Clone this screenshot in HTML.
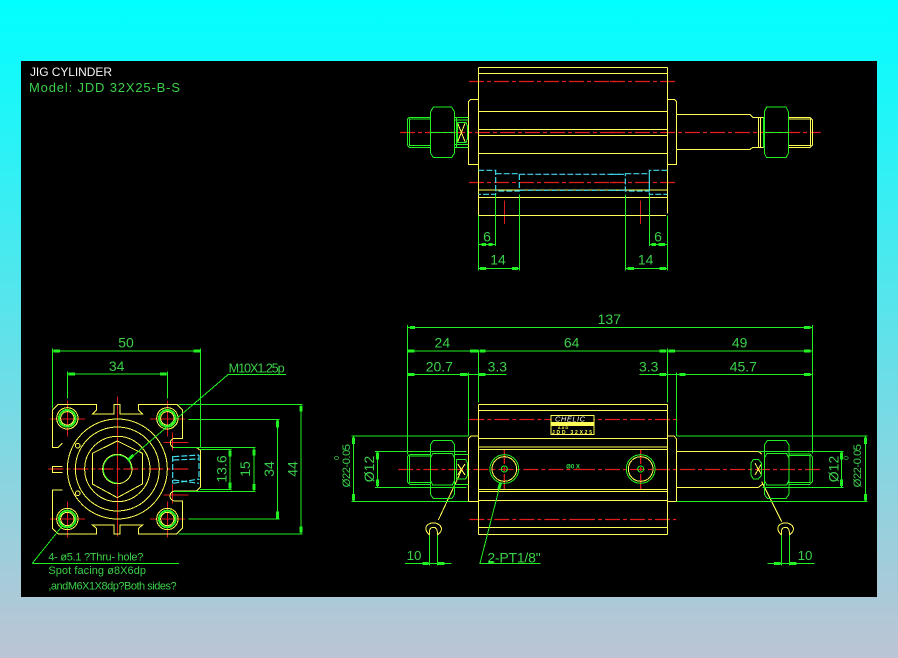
<!DOCTYPE html>
<html><head><meta charset="utf-8"><style>
html,body{margin:0;padding:0;width:898px;height:658px;overflow:hidden;background:linear-gradient(180deg,#00ffff 0,#5fe2ea 330px,#bcc4d4 658px)}
svg{position:absolute;left:0;top:0}
path,circle,line{fill:none;vector-effect:non-scaling-stroke;stroke-width:1;shape-rendering:crispEdges}
.y path,.y circle{stroke:#ffff55}.g path,.g circle{stroke:#22f022}
.r path{stroke:#e01c1c;stroke-dasharray:15 3 4 3;stroke-width:1.3;shape-rendering:auto}.rs path{stroke:#dc1c1c}
.c path{stroke:#40dcec;stroke-dasharray:6 2;stroke-width:1.2;shape-rendering:auto}
.a path{stroke:#22f022;stroke-width:3}
.h circle{stroke:#22f022;stroke-width:2}
text{font-family:"Liberation Sans","DejaVu Sans",sans-serif;fill:#3bd04a;font-size:42px;text-anchor:middle}
</style></head><body>
<svg width="898" height="658" viewBox="0 0 898 658">
<rect x="21" y="61" width="856" height="536" fill="#000"/>
<text x="30" y="76" style="font-size:12px;text-anchor:start;fill:#f4f4f4" textLength="82">JIG  CYLINDER</text>
<text x="29" y="92" style="font-size:13px;text-anchor:start" textLength="151">Model: JDD 32X25-B-S</text>

<!-- TOP VIEW left -->
<g transform="translate(400 60) scale(.33333)">
<g class="r"><path d="M207 64.5H660M0 217.5H660M207 367.5H660"/></g>
<g class="rs"><path d="M313 422V492"/></g>
<g class="y"><path d="M235 22H660M235 40H660M235 154H660M235 208H660M235 226H660M235 280H660M235 390H660M235 412H660M235 466H660M235 22V466M235 118H212L205 125V313H235"/></g>
<g class="c"><path d="M235 331H287V403H235M287 341H358V393H287M358 343H660M358 391H660"/></g>
<g class="g"><path d="M100 141H155L163 155V280L155 293H100L92 280V155ZM92 217H163M92 172H28L22 178V255L28 262H92M92 177H28V257H92M163 172H205M163 180H205M163 254H205M163 262H205M170 172V262M172 188H198L203 200V235L198 247H172ZM235 466V632M287 403V558M358 403V632M235 553H287M235 625H358"/></g>
<g class="y"><path d="M173 190L195 245M195 190L173 245"/></g>
<g class="a"><path d="M245 553H258M265 553H278M240 625H258M336 625H354"/></g>
<text x="261" y="544">6</text><text x="294" y="614">14</text>
</g>
<!-- TOP VIEW right -->
<g transform="translate(610 60) scale(.33333)">
<g class="r"><path d="M0 64.5H198M0 217.5H632M0 367.5H198"/></g>
<g class="rs"><path d="M91 422V492"/></g>
<g class="y"><path d="M0 22H172M0 40H172M0 154H172M0 208H172M0 226H172M0 280H172M0 390H172M0 412H172M0 466H168M172 22V460M172 118H193L200 125V313H172M200 163H420L428 172H462M200 268H420L428 262H462M445 172V262M452 172V262M535 172H600L607 180V255L600 262H535M535 177H602V257H535"/></g>
<g class="c"><path d="M172 331H118V403H172M46 341H118V393H46ZM0 343H46M0 391H46"/></g>
<g class="g"><path d="M470 141H528L535 155V280L528 293H470L463 280V155ZM463 217H535M460 172V262M172 466V632M118 403V558M46 403V632M118 553H172M46 625H172"/></g>
<g class="a"><path d="M125 553H138M145 553H165M52 625H72M148 625H168"/></g>
<text x="144" y="544">6</text><text x="107" y="614">14</text>
</g>

<!-- BOTTOM VIEW left -->
<g transform="translate(330 300) scale(.33333)">
<g class="r"><path d="M418 358.5H750M205 508.5H750M418 658.5H750M523 447V570"/></g>
<g class="y"><path d="M445 313V703M445 313H750M445 331H750M445 415H750M445 441H750M448 448H750M445 568H750M445 574H750M445 601H750M445 683H750M445 703H750M445 408H423L415 416V604H445"/>
<circle cx="523" cy="507" r="37"/>
<path d="M395 510L325 660M298 705L290 695Q284 683 292 675Q310 662 328 675Q338 683 332 695L322 705V697Q322 682 310 682Q298 682 298 697Z"/></g>
<g class="g"><circle cx="523" cy="507" r="43"/><circle cx="523" cy="507" r="9"/>
<path d="M310 421H365L374 435V582L365 596H310L301 582V435ZM301 475L308 461H367L374 475V540L367 555H308L301 540ZM303 463H240L232 470V545L240 553H303M303 468H238V548H303M374 463H415M374 553H415M380 478H407L413 490V525L407 537H380ZM135 454H410M135 562H410M65 408H415M65 604H415M143 454V562M71 408V604M232 75V463M415 218V408M445 150V308M232 82H750M232 153H750M232 223H530M298 705V797M322 705V797M225 790H365M512 548L450 790H632"/></g>
<g class="y"><path d="M383 492L405 525M405 492L383 525"/></g>
<g class="a"><path d="M240 82H255M232 153H253M420 153H445M450 153H467M232 223H253M390 223H413M447 223H467M143 458V478M143 538V558M71 412V432M71 582V602M277 790H296M324 790H344M512 548L506 568M475 788H490"/></g>
<text x="337" y="143">24</text><text x="328" y="214">20.7</text><text x="502" y="214">3.3</text><text x="725" y="143">64</text>
<text transform="translate(132 507) rotate(-90)">Ø12</text>
<text transform="translate(60 497) rotate(-90)" style="font-size:34px" textLength="130">Ø22-0.05</text>
<text transform="translate(27 474) rotate(-90)" style="font-size:22px">0</text>
<text x="252" y="780" style="font-size:40px">10</text>
<text x="552" y="788" textLength="160">2-PT1/8"</text>
</g>
<!-- BOTTOM VIEW right -->
<g transform="translate(580 300) scale(.33333)">
<g class="r"><path d="M0 358.5H289M0 508.5H723M0 658.5H289M182 447V570"/></g>
<g class="y"><path d="M262 313V703M0 313H262M0 331H262M0 415H262M0 441H262M0 448H262M0 568H262M0 574H262M0 601H262M0 683H262M0 703H262M262 408H282L289 416V604H262M289 454H535L545 462M289 562H535L548 552"/>
<circle cx="182" cy="507" r="37"/>
<path d="M545 545L605 665M604 705L596 695Q590 683 598 675Q616 662 634 675Q644 683 638 695L628 705V697Q628 682 616 682Q604 682 604 697ZM525 490L545 525M545 490L525 525"/></g>
<g class="g"><circle cx="182" cy="507" r="43"/><circle cx="182" cy="507" r="9"/>
<path d="M562 421H618L627 435V582L618 596H562L553 582V435ZM553 475L560 461H620L627 475V540L620 555H560L553 540ZM627 462H690L697 470V545L690 553H627M627 467H690V548H627M513 490L520 478H535L545 490V525L535 537H520L513 525ZM289 408H862M289 604H862M535 454H790M548 562H790M785 454V562M856 408V604M697 75V460M289 218V408M262 145V308M0 82H697M0 153H697M178 223H697M604 705V797M628 705V797M562 790H703"/></g>
<g class="a"><path d="M672 82H692M238 153H258M265 153H285M672 153H692M238 223H258M298 223H316M672 223H692M785 458V478M785 538V558M856 412V432M856 582V602M582 790H602M630 790H650"/></g>
<text x="88" y="72">137</text><text x="479" y="143">49</text><text x="206" y="214">3.3</text><text x="490" y="214">45.7</text>
<text transform="translate(775 507) rotate(-90)">Ø12</text>
<text transform="translate(843 497) rotate(-90)" style="font-size:34px" textLength="130">Ø22-0.05</text>
<text transform="translate(806 474) rotate(-90)" style="font-size:22px">0</text>
<text x="675" y="780" style="font-size:40px">10</text>
</g>
<!-- Nameplate -->
<rect x="551" y="415.5" width="43" height="19" fill="#000" stroke="#ffff55"/>
<rect x="551" y="422" width="43" height="4" fill="#ffff55"/>
<text x="570" y="421.5" style="font-size:7.5px;fill:#fffff0;font-style:italic" textLength="30">CHELIC</text>
<text x="563" y="429" style="font-size:4px;fill:#ffff55;font-weight:bold">A A D</text>
<text x="572" y="434" style="font-size:5px;fill:#ffff55;font-weight:bold" textLength="40">JDD 32X25</text>
<text x="573" y="468.5" style="font-size:6px;fill:#33dd44;font-weight:bold">Ø0 X</text>

<!-- FRONT VIEW -->
<g transform="translate(0 330) scale(.33333)">
<g class="r"><path d="M145 417H570"/></g>
<g class="rs"><path d="M352 200V620M150 267H255M202 212V320M450 267H555M502 212V320M150 567H255M202 514V622M450 567H555M502 514V622M490 337H565M518 308V362M490 495H565M518 462V520"/></g>
<g class="y"><path d="M157 240L175 223H290V240L277 252H342V223H360V252H428L415 240V223H530L547 240V325H525A14 14 0 0 0 525 353H590L602 362V470L590 483H525A15 15 0 0 0 525 513H547V595L530 612H415V595L428 585H360V612H342V585H277L290 595V612H175L157 595V480H187M157 240V352H175L187 340M187 410H157V428H187"/>
<circle cx="352" cy="417" r="150"/><circle cx="352" cy="417" r="126"/><circle cx="352" cy="417" r="98"/><circle cx="352" cy="417" r="44"/>
<path d="M277 370L352 333L427 370V462L352 503L277 462Z"/>
<circle cx="233" cy="347" r="7"/><circle cx="233" cy="490" r="7"/>
<circle cx="202" cy="265" r="32"/><circle cx="202" cy="265" r="20"/><circle cx="502" cy="265" r="32"/><circle cx="502" cy="265" r="20"/><circle cx="202" cy="567" r="32"/><circle cx="202" cy="567" r="20"/><circle cx="502" cy="567" r="32"/><circle cx="502" cy="567" r="20"/></g>
<g class="c"><path d="M518 378V460M597 375V450M520 380L597 375M520 390L597 387M520 450L597 460M520 460L597 447"/></g>
<g class="h"><circle cx="202" cy="265" r="25"/><circle cx="502" cy="265" r="25"/><circle cx="202" cy="567" r="25"/><circle cx="502" cy="567" r="25"/></g>
<g class="g">
<path d="M352 375A42 42 0 0 0 352 459M352 375A42 42 0 0 1 394 417"/>
<path d="M157 63H602M157 55V235M602 55V352M203 132H503M203 125V205M503 125V205M535 223H908M535 612H908M903 223V612M565 268H838M565 567H838M832 268V567M520 352H767M520 484H767M762 352V484M600 358H695M600 479H695M690 358V479M685 133H858M685 133L385 390M97 700H537M97 700L185 590"/></g>
<g class="a"><path d="M160 63H180M580 63H600M205 132H225M480 132H500M903 228V245M903 590V608M832 272V292M832 545V565M762 358V376M762 462V480M690 362V380M690 458V476M385 390L400 375"/></g>
<text x="378" y="53">50</text><text x="350" y="123">34</text>
<text x="770" y="128" textLength="168" style="font-size:38px">M10X1.25p</text>
<text transform="translate(892 417) rotate(-90)">44</text>
<text transform="translate(822 417) rotate(-90)">34</text>
<text transform="translate(750 417) rotate(-90)">15</text>
<text transform="translate(679 417) rotate(-90)">13.6</text>
<text x="145" y="692" style="text-anchor:start;font-size:33px" textLength="285">4- ø5.1 ?Thru- hole?</text>
<text x="145" y="732" style="text-anchor:start;font-size:33px" textLength="293">Spot facing ø8X6dp</text>
<text x="145" y="778" style="text-anchor:start;font-size:33px" textLength="385">,andM6X1X8dp?Both sides?</text>
</g>
</svg>
</body></html>
